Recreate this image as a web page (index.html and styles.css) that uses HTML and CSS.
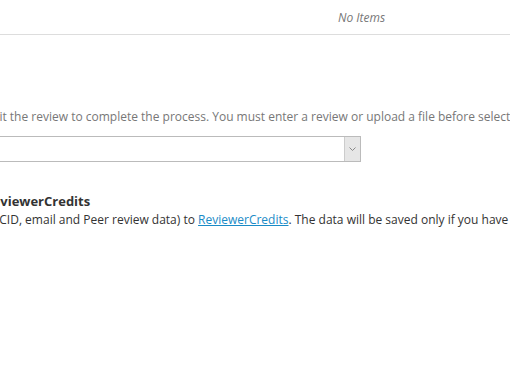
FILE: index.html
```html
<!DOCTYPE html>
<html lang="en">
<head>
<meta charset="UTF-8" />
<meta name="viewport" content="width=device-width, initial-scale=1" />
<title>Review</title>
<link rel="stylesheet" href="styles.css">
</head>
<body>

<header class="topbar">
  <span class="cart-empty">No Items</span>
</header>

<main class="review">
  <p class="hint"><span class="cut">Subm</span>it the review to complete the process. You must enter a review or upload a file before selecting a recommendation.</p>

  <div class="decision">
    <select>
      <option></option>
      <option>Accept</option>
      <option>Minor revision</option>
      <option>Major revision</option>
      <option>Reject</option>
    </select>
    <span class="arrow">
      <svg width="7" height="4" viewBox="0 0 7 4"><path d="M0.5 0.5l3 3 3-3" fill="none" stroke="#888" stroke-width="1"/></svg>
    </span>
  </div>

  <h3 class="credits-title"><span class="cut2">Re</span>viewerCredits</h3>
  <p class="credits-text"><span class="cut3">(OR</span>CID, email and Peer review data) to <a href="#">ReviewerCredits</a>. The data will be saved only if you have given your consent.</p>
</main>

</body>
</html>
```

FILE: styles.css
```css
body { margin: 0; font-family: "Open Sans", Arial, sans-serif; color: #333; background: #fff; overflow: hidden; }

.topbar { height: 34px; border-bottom: 1px solid #ddd; display: flex; align-items: center; padding-left: 338px; }
.cart-empty { font-size: 12px; font-style: italic; color: #777; }

.review { white-space: nowrap; padding-top: 73px; }
.cut, .cut2, .cut3 { display: inline-block; }
.cut { margin-left: -33px; }

.hint { margin: 0; font-size: 12px; color: #777; line-height: 18px; }

.decision { display: flex; width: 361px; height: 26px; margin-top: 10px; border: 1px solid #bbb; border-left: none; box-sizing: border-box; }
.decision select { flex: 1; border: none; background: #fff; appearance: none; font: inherit; }
.arrow { width: 15px; background: #e6e6e6; border-left: 1px solid #ccc; display: flex; align-items: center; justify-content: center; }

.credits-title { margin: 30px 0 0; font-size: 13px; line-height: 18px; color: #333; }
.cut2 { margin-left: -16px; }

.credits-text { margin: 1px 0 0; font-size: 12px; line-height: 18px; }
.cut3 { margin-left: -21px; }
.credits-text a { color: #1a8bc7; }
```
